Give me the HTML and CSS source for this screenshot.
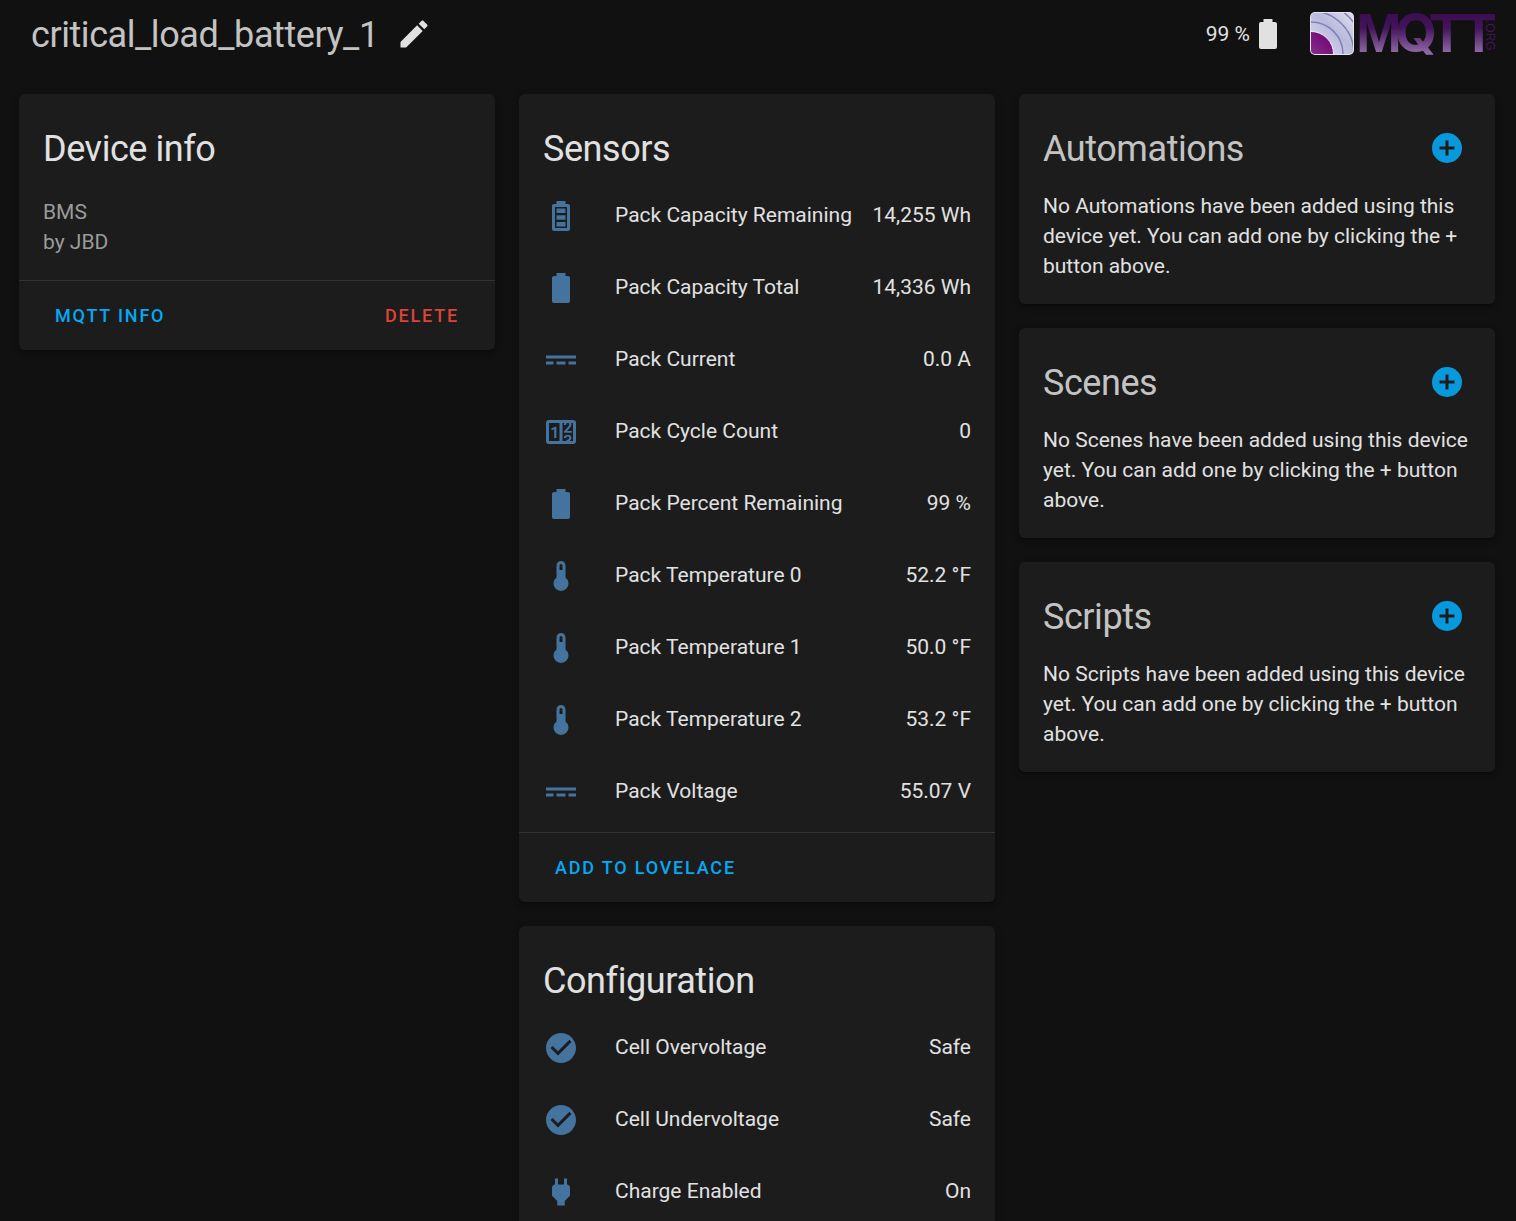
FILE: index.html
```html
<!DOCTYPE html>
<html lang="en">
<head>
<meta charset="utf-8">
<meta name="viewport" content="width=device-width, initial-scale=1">
<title>critical_load_battery_1</title>
<link rel="stylesheet" href="styles.css">
</head>
<body>
<svg class="sprite" aria-hidden="true">
  <symbol id="battery" viewBox="0 0 24 24"><path d="M16.67,4H15V2H9V4H7.33A1.33,1.33 0 0,0 6,5.33V20.67C6,21.4 6.6,22 7.33,22H16.67A1.33,1.33 0 0,0 18,20.67V5.33C18,4.6 17.4,4 16.67,4Z"/></symbol>
  <symbol id="battery-high" viewBox="0 0 24 24"><path d="M16 20H8V6H16M16.67 4H15V2H9V4H7.33C6.6 4 6 4.6 6 5.33V20.67C6 21.4 6.6 22 7.33 22H16.67C17.41 22 18 21.41 18 20.67V5.33C18 4.6 17.4 4 16.67 4M15 16H9V19H15V16M15 7H9V10H15V7M15 11.5H9V14.5H15V11.5Z"/></symbol>
  <symbol id="current-dc" viewBox="0 0 24 24"><path d="M2,9V11H22V9H2M2,13V15H7V13H2M9,13V15H15V13H9M17,13V15H22V13H17Z"/></symbol>
  <symbol id="counter" viewBox="0 0 24 24"><path d="M4,4H20A2,2 0 0,1 22,6V18A2,2 0 0,1 20,20H4A2,2 0 0,1 2,18V6A2,2 0 0,1 4,4M4,6V18H11V6H4M20,18V6H18.76C19,6.54 18.95,7.07 18.95,7.13C18.88,7.8 18.41,8.5 18.24,8.75L15.91,11.3L19.23,11.28L19.24,12.5L14.04,12.47L14,11.47C14,11.47 17.05,8.24 17.2,7.95C17.34,7.67 17.91,6 16.5,6C15.27,6.05 15.41,7.3 15.41,7.3L13.87,7.31C13.87,7.31 13.88,6.65 14.25,6H13V18H15.58L15.57,17.14L16.54,17.13C16.54,17.13 17.45,16.97 17.46,16.08C17.5,15.08 16.65,15.08 16.5,15.08C16.37,15.08 15.43,15.13 15.43,15.95H13.91C13.91,15.95 13.95,13.89 16.5,13.89C19.1,13.89 18.96,15.91 18.96,15.91C18.96,15.91 19,17.16 17.85,17.63L18.37,18H20M8.92,16H7.42V10.2L5.62,10.76V9.53L8.76,8.41H8.92V16Z"/></symbol>
  <symbol id="thermometer" viewBox="0 0 24 24"><path d="M15 13V5A3 3 0 0 0 9 5V13A5 5 0 1 0 15 13M12 4A1 1 0 0 1 13 5V8H11V5A1 1 0 0 1 12 4Z"/></symbol>
  <symbol id="check-circle" viewBox="0 0 24 24"><path d="M12 2C6.5 2 2 6.5 2 12S6.5 22 12 22 22 17.5 22 12 17.5 2 12 2M10 17L5 12L6.41 10.59L10 14.17L17.59 6.58L19 8L10 17Z"/></symbol>
  <symbol id="power-plug" viewBox="0 0 24 24"><path d="M16,7V3H14V7H10V3H8V7H8C7,7 6,8 6,9V14.5L9.5,18V21H14.5V18L18,14.5V9C18,8 17,7 16,7Z"/></symbol>
  <symbol id="plus-circle" viewBox="0 0 24 24"><path d="M17,13H13V17H11V13H7V11H11V7H13V11H17M12,2A10,10 0 0,0 2,12A10,10 0 0,0 12,22A10,10 0 0,0 22,12A10,10 0 0,0 12,2Z"/></symbol>
  <symbol id="pencil" viewBox="0 0 24 24"><path d="M20.71,7.04C21.1,6.65 21.1,6 20.71,5.63L18.37,3.29C18,2.9 17.35,2.9 16.96,3.29L15.12,5.12L18.87,8.87M3,17.25V21H6.75L17.81,9.93L14.06,6.18L3,17.25Z"/></symbol>
</svg>

<header class="page-header">
  <h1 class="page-title">critical_load_battery_1</h1>
  <button class="icon-button" type="button" aria-label="Edit name"><svg class="icon"><use href="#pencil"/></svg></button>
  <div class="battery-state">99 % <svg class="icon"><use href="#battery"/></svg></div>
  <svg class="logo" viewBox="0 -3 188 50" role="img" aria-label="MQTT.org">
    <defs>
      <linearGradient id="letters" gradientUnits="userSpaceOnUse" x1="0" y1="1" x2="0" y2="44">
        <stop offset="0" stop-color="#3c0d50"/><stop offset=".35" stop-color="#43145a"/><stop offset="1" stop-color="#9a74ae"/>
      </linearGradient>
      <linearGradient id="tile" x1="0" y1="1" x2="1" y2="0">
        <stop offset="0" stop-color="#e6e5f3"/><stop offset=".55" stop-color="#b9b9dc"/><stop offset="1" stop-color="#e0dff0"/>
      </linearGradient>
      <linearGradient id="core" x1="0" y1="1" x2="1" y2="0">
        <stop offset="0" stop-color="#a562a6"/><stop offset=".8" stop-color="#75107a"/>
      </linearGradient>
      <clipPath id="tile-clip"><rect x="1" y="1" width="42" height="41" rx="4"/></clipPath>
    </defs>
    <rect width="44" height="43" rx="5" fill="#e9e3f0"/>
    <g clip-path="url(#tile-clip)">
      <rect width="44" height="43" fill="url(#tile)"/>
      <g fill="none" stroke="#8082b6" stroke-width="1.5"><circle cx="1" cy="42" r="32"/><circle cx="1" cy="42" r="43"/><circle cx="1" cy="42" r="53"/></g>
      <circle cx="1" cy="42" r="22.5" fill="url(#core)" stroke="#eee8f5"/>
    </g>
    <text class="logo-word" y="40" fill="url(#letters)"><tspan x="46">M</tspan><tspan class="logo-q" x="85">Q</tspan><tspan x="120 152">TT</tspan></text>
    <text class="logo-org" transform="translate(176 8) rotate(90)">.ORG</text>
  </svg>
</header>

<main class="columns">
  <div class="column">
    <section class="card">
      <h2 class="card-title">Device info</h2>
      <div class="card-text device">BMS<br>by JBD</div>
      <div class="actions">
        <button class="text-button" type="button">MQTT INFO</button>
        <button class="text-button danger" type="button">DELETE</button>
      </div>
    </section>
  </div>

  <div class="column">
    <section class="card">
      <h2 class="card-title">Sensors</h2>
      <ul class="rows">
        <li class="row"><svg class="icon"><use href="#battery-high"/></svg><span class="name">Pack Capacity Remaining</span><span>14,255 Wh</span></li>
        <li class="row"><svg class="icon"><use href="#battery"/></svg><span class="name">Pack Capacity Total</span><span>14,336 Wh</span></li>
        <li class="row"><svg class="icon"><use href="#current-dc"/></svg><span class="name">Pack Current</span><span>0.0 A</span></li>
        <li class="row"><svg class="icon"><use href="#counter"/></svg><span class="name">Pack Cycle Count</span><span>0</span></li>
        <li class="row"><svg class="icon"><use href="#battery"/></svg><span class="name">Pack Percent Remaining</span><span>99 %</span></li>
        <li class="row"><svg class="icon"><use href="#thermometer"/></svg><span class="name">Pack Temperature 0</span><span>52.2 °F</span></li>
        <li class="row"><svg class="icon"><use href="#thermometer"/></svg><span class="name">Pack Temperature 1</span><span>50.0 °F</span></li>
        <li class="row"><svg class="icon"><use href="#thermometer"/></svg><span class="name">Pack Temperature 2</span><span>53.2 °F</span></li>
        <li class="row"><svg class="icon"><use href="#current-dc"/></svg><span class="name">Pack Voltage</span><span>55.07 V</span></li>
      </ul>
      <div class="actions">
        <button class="text-button" type="button">ADD TO LOVELACE</button>
      </div>
    </section>
    <section class="card">
      <h2 class="card-title">Configuration</h2>
      <ul class="rows">
        <li class="row"><svg class="icon"><use href="#check-circle"/></svg><span class="name">Cell Overvoltage</span><span>Safe</span></li>
        <li class="row"><svg class="icon"><use href="#check-circle"/></svg><span class="name">Cell Undervoltage</span><span>Safe</span></li>
        <li class="row"><svg class="icon"><use href="#power-plug"/></svg><span class="name">Charge Enabled</span><span>On</span></li>
      </ul>
    </section>
  </div>

  <div class="column">
    <section class="card">
      <h2 class="card-title muted">Automations <button class="icon-button add" type="button" aria-label="Add automation"><svg class="icon"><use href="#plus-circle"/></svg></button></h2>
      <p class="card-text">No Automations have been added using this device yet. You can add one by clicking the + button above.</p>
    </section>
    <section class="card">
      <h2 class="card-title muted">Scenes <button class="icon-button add" type="button" aria-label="Add scene"><svg class="icon"><use href="#plus-circle"/></svg></button></h2>
      <p class="card-text">No Scenes have been added using this device yet. You can add one by clicking the + button above.</p>
    </section>
    <section class="card">
      <h2 class="card-title muted">Scripts <button class="icon-button add" type="button" aria-label="Add script"><svg class="icon"><use href="#plus-circle"/></svg></button></h2>
      <p class="card-text">No Scripts have been added using this device yet. You can add one by clicking the + button above.</p>
    </section>
  </div>
</main>
</body>
</html>
```

FILE: styles.css
```css
:root {
  --page: #111111;
  --card: #1c1c1c;
  --text: #e1e1e1;
  --muted: #c3c3c3;
  --secondary: #9b9b9b;
  --divider: #333333;
  --primary: #03a9f4;
  --danger: #db4437;
  --state-icon: #44739e;
}

* {
  box-sizing: border-box;
}

body {
  margin: 0;
  height: 100vh;
  overflow: hidden;
  background: var(--page);
  color: var(--text);
  font: 21px/30px Roboto, sans-serif;
}

h1, h2, p, ul {
  margin: 0;
  padding: 0;
  font-weight: 400;
}

button {
  border: 0;
  padding: 0;
  background: none;
  color: inherit;
  font: inherit;
  cursor: pointer;
}

.sprite {
  position: absolute;
  width: 0;
  height: 0;
}

.icon {
  display: block;
  flex: none;
  width: 36px;
  height: 36px;
  fill: currentColor;
}

.icon-button {
  flex: none;
}

.page-header {
  display: flex;
  align-items: center;
  height: 68px;
  padding: 0 18px 0 31px;
}

.page-title {
  margin-right: 17px;
  padding-top: 2px;
  color: var(--muted);
  font-size: 36px;
  line-height: 48px;
  letter-spacing: -0.012em;
}

.battery-state {
  display: flex;
  align-items: center;
  margin-left: auto;
}

.logo {
  flex: none;
  width: 188px;
  height: 50px;
  margin-left: 24px;
  overflow: visible;
}

.logo-word {
  font: 700 55px "Liberation Sans", sans-serif;
}

.logo-q {
  font: 700 54px Inter, sans-serif;
}

.logo-org {
  font: 12px "Liberation Sans", sans-serif;
  fill: #45145c;
}

.columns {
  display: grid;
  grid-template-columns: repeat(3, minmax(0, 1fr));
  gap: 24px;
  padding: 26px 21px 24px 19px;
}

.column {
  display: flex;
  flex-direction: column;
  gap: 24px;
}

.card {
  border-radius: 6px;
  background: var(--card);
  box-shadow: 0 3px 3px rgba(0, 0, 0, 0.14), 0 2px 8px rgba(0, 0, 0, 0.12), 0 3px 2px -2px rgba(0, 0, 0, 0.2);
}

.card-title {
  display: flex;
  align-items: flex-start;
  justify-content: space-between;
  padding: 18px 30px 0 24px;
  font-size: 36px;
  line-height: 74px;
  letter-spacing: -0.012em;
}

.muted {
  color: var(--muted);
}

.add {
  padding: 18px 0;
  color: #0899dc;
}

.card-text {
  padding: 5px 24px 23px;
}

.device {
  padding-top: 11px;
  color: var(--secondary);
}

.rows {
  display: flex;
  flex-direction: column;
  gap: 12px;
  padding: 0 24px 10px;
  list-style: none;
}

.row {
  display: flex;
  align-items: center;
  height: 60px;
}

.row span {
  padding-bottom: 2px;
}

.row .icon {
  margin-right: 36px;
  color: var(--state-icon);
}

.name {
  flex: 1;
}

.actions {
  display: flex;
  justify-content: space-between;
  padding: 8px 24px 7px;
  border-top: 1px solid var(--divider);
}

.text-button {
  height: 54px;
  padding: 0 12px;
  color: var(--primary);
  font-size: 18px;
  font-weight: 500;
  letter-spacing: 0.1em;
}

.danger {
  color: var(--danger);
}
```
